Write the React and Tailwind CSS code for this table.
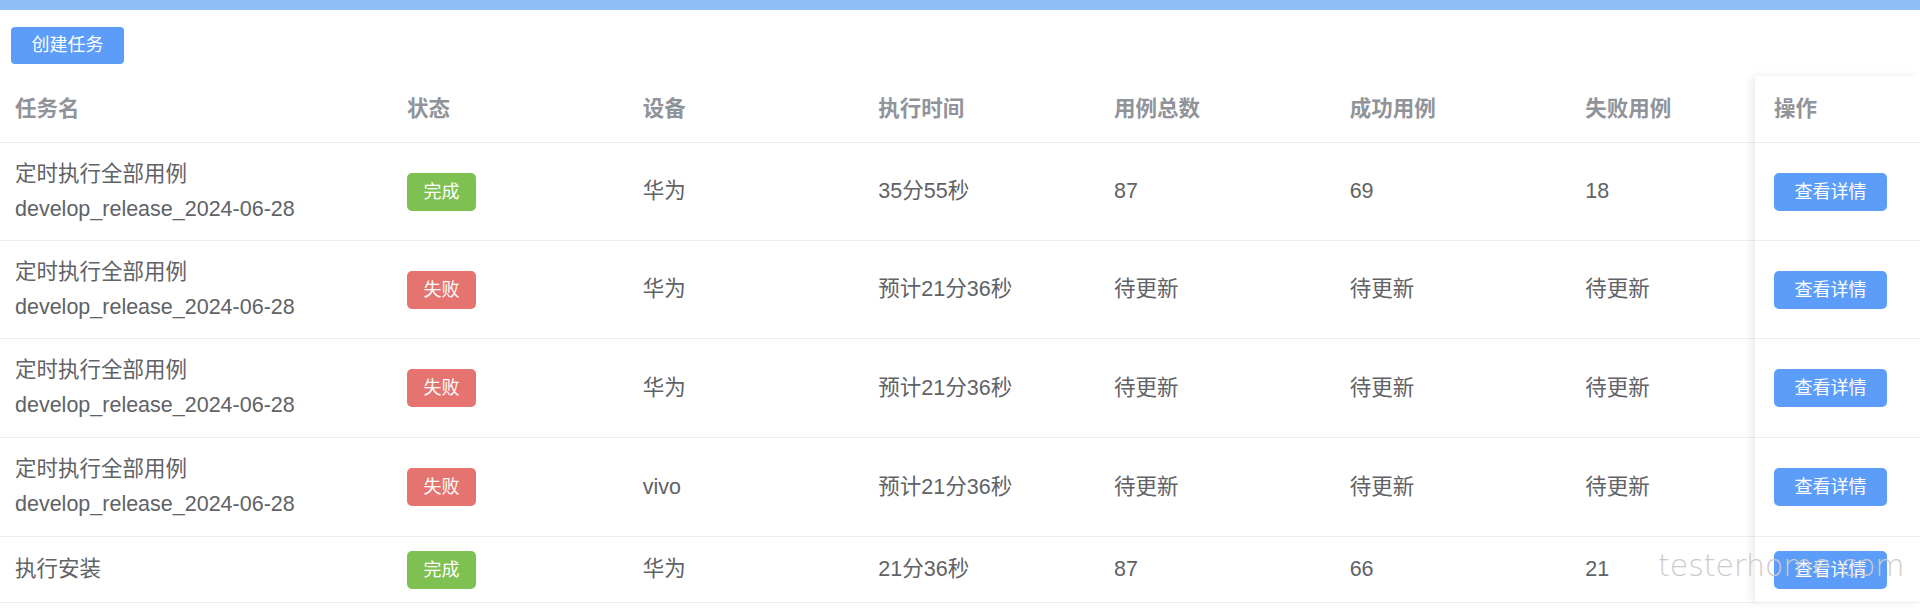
import React from "react";

const rows = [
  { name: "定时执行全部用例", sub: "develop_release_2024-06-28", ok: true, dev: "华为", time: "35分55秒", total: "87", succ: "69", fail: "18", h: "h-[98px]" },
  { name: "定时执行全部用例", sub: "develop_release_2024-06-28", ok: false, dev: "华为", time: "预计21分36秒", total: "待更新", succ: "待更新", fail: "待更新", h: "h-[98px]" },
  { name: "定时执行全部用例", sub: "develop_release_2024-06-28", ok: false, dev: "华为", time: "预计21分36秒", total: "待更新", succ: "待更新", fail: "待更新", h: "h-[99px]" },
  { name: "定时执行全部用例", sub: "develop_release_2024-06-28", ok: false, dev: "vivo", time: "预计21分36秒", total: "待更新", succ: "待更新", fail: "待更新", h: "h-[99px]" },
  { name: "执行安装", sub: null, ok: true, dev: "华为", time: "21分36秒", total: "87", succ: "66", fail: "21", h: "h-[66px]" },
];

const headers = ["状态", "设备", "执行时间", "用例总数", "成功用例", "失败用例"];

function Cell({ children, first }) {
  return (
    <div className={(first ? "w-[392px]" : "w-[235.67px]") + " shrink-0 pl-[15px] flex flex-col justify-center"}>
      {children}
    </div>
  );
}

export default function App() {
  return (
    <div className="relative w-[1920px] h-[608px] overflow-hidden bg-white font-['Liberation_Sans','Noto_Sans_CJK_SC',sans-serif]">
      <div className="h-[10px] bg-[#90bff8]" />
      <div className="h-[66px] pl-[11px] pt-[17px]">
        <button className="w-[113px] h-[37px] rounded-[4px] bg-[#5b9df9] text-white text-[18px] leading-[37px] text-center">
          创建任务
        </button>
      </div>

      <div className="flex">
        {/* scrolling body */}
        <div className="flex-1 min-w-0 overflow-hidden">
          <div className="flex h-[67px] border-b border-[#ebeef5] text-[21.5px] font-bold text-[#909399] leading-[30px]">
            <Cell first>任务名</Cell>
            {headers.map((h) => (
              <Cell key={h}>{h}</Cell>
            ))}
          </div>
          {rows.map((r, i) => (
            <div key={i} className={"flex border-b border-[#ebeef5] text-[21.5px] text-[#606266] leading-[35px] " + r.h}>
              <Cell first>
                <div className="whitespace-nowrap">{r.name}</div>
                {r.sub && <div className="whitespace-nowrap">{r.sub}</div>}
              </Cell>
              <Cell>
                <div
                  className={
                    "w-[69px] h-[38px] rounded-[5px] text-white text-[18px] leading-[38px] text-center " +
                    (r.ok ? "bg-[#7ec152]" : "bg-[#e5736f]")
                  }
                >
                  {r.ok ? "完成" : "失败"}
                </div>
              </Cell>
              <Cell>{r.dev}</Cell>
              <Cell>{r.time}</Cell>
              <Cell>{r.total}</Cell>
              <Cell>{r.succ}</Cell>
              <Cell>{r.fail}</Cell>
            </div>
          ))}
        </div>

        {/* fixed right column */}
        <div className="relative z-10 w-[165px] shrink-0 bg-white shadow-[-4px_0_8px_rgba(0,0,0,0.07)]">
          <div className="h-[67px] border-b border-[#ebeef5] pl-[19px] flex items-center text-[21.5px] font-bold text-[#909399]">
            操作
          </div>
          {rows.map((r, i) => (
            <div key={i} className={"border-b border-[#ebeef5] pl-[19px] flex items-center " + r.h}>
              <button className="w-[113px] h-[38px] rounded-[5px] bg-[#5b9df9] text-white text-[18px] leading-[38px] text-center">
                查看详情
              </button>
            </div>
          ))}
        </div>
      </div>

      <div className="absolute z-20 left-[1658px] top-[548px] text-[30px] leading-[36px] font-extralight text-[#cbcbcb] font-['DejaVu_Sans',sans-serif] pointer-events-none whitespace-nowrap">
        testerhome.com
      </div>
    </div>
  );
}
